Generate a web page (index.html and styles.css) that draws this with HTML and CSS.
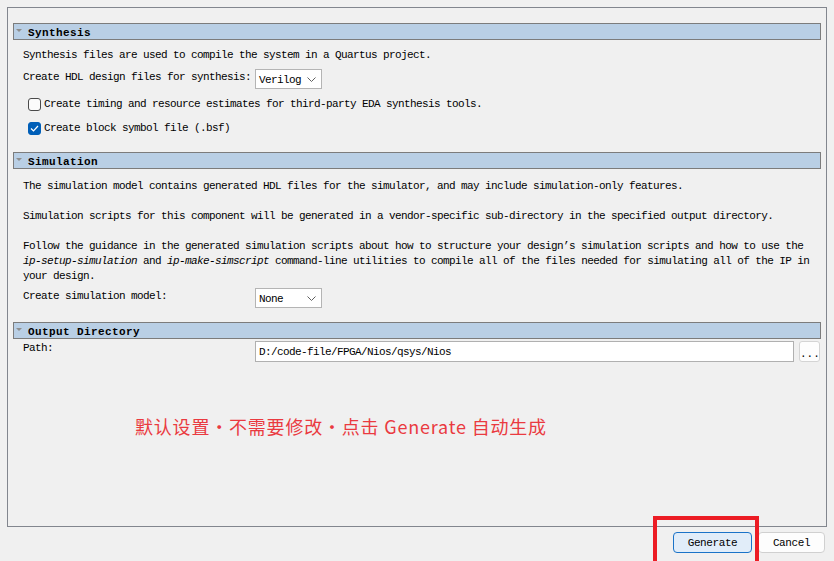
FILE: index.html
```html
<!DOCTYPE html>
<html lang="en">
<head>
  <meta charset="UTF-8">
  <title>Generation</title>
  <link rel="stylesheet" href="styles.css">
</head>
<body>
  <div class="panel">
    <!-- Synthesis -->
    <div class="section-head"><span class="arrow"></span>Synthesis</div>
    <div class="line first">Synthesis files are used to compile the system in a Quartus project.</div>
    <div class="field-row">
      <span class="label">Create HDL design files for synthesis:</span>
      <div class="select"><span>Verilog</span>
        <svg width="9" height="6" viewBox="0 0 9 6"><polyline points="0.5,0.5 4.5,4.5 8.5,0.5" fill="none" stroke="#606060" stroke-width="1"/></svg>
      </div>
    </div>
    <div class="check-row">
      <span class="check"></span>Create timing and resource estimates for third-party EDA synthesis tools.
    </div>
    <div class="check-row second">
      <span class="check on">
        <svg width="9" height="7" viewBox="0 0 9 7"><polyline points="1,3.5 3.5,6 8,1" fill="none" stroke="#fff" stroke-width="1.2"/></svg>
      </span>Create block symbol file (.bsf)
    </div>

    <!-- Simulation -->
    <div class="section-head gap"><span class="arrow"></span>Simulation</div>
    <p class="para first">The simulation model contains generated HDL files for the simulator, and may include simulation-only features.</p>
    <p class="para">Simulation scripts for this component will be generated in a vendor-specific sub-directory in the specified output directory.</p>
    <p class="para">Follow the guidance in the generated simulation scripts about how to structure your design’s simulation scripts and how to use the<br><em>ip-setup-simulation</em> and <em>ip-make-simscript</em> command-line utilities to compile all of the files needed for simulating all of the IP in<br>your design.</p>
    <div class="field-row sim">
      <span class="label">Create simulation model:</span>
      <div class="select"><span>None</span>
        <svg width="9" height="6" viewBox="0 0 9 6"><polyline points="0.5,0.5 4.5,4.5 8.5,0.5" fill="none" stroke="#606060" stroke-width="1"/></svg>
      </div>
    </div>

    <!-- Output Directory -->
    <div class="section-head gap"><span class="arrow"></span>Output Directory</div>
    <div class="path-row">
      <span class="label">Path:</span>
      <div class="path-input">D:/code-file/FPGA/Nios/qsys/Nios</div>
      <div class="browse">...</div>
    </div>

    <div class="note">默认设置・不需要修改・点击 Generate 自动生成</div>
  </div>

  <div class="actions">
    <button class="btn primary">Generate</button>
    <button class="btn">Cancel</button>
  </div>

  <div class="highlight"></div>
</body>
</html>
```

FILE: styles.css
```css
body {
  margin: 0;
  width: 834px;
  height: 561px;
  overflow: hidden;
  position: relative;
  background-color: #f0f0f0;
  color: #000;
  font-family: "Liberation Mono", "Noto Sans CJK SC", monospace;
  font-size: 11px;
  letter-spacing: -0.6px;
}

.panel {
  margin: 7px 0 0 7px;
  width: 820px;
  height: 520px;
  box-sizing: border-box;
  border: 1px solid #82868e;
  padding: 15px 5px 0 5px;
}

.section-head {
  display: flex;
  height: 17px;
  box-sizing: border-box;
  padding-top: 2px;
  line-height: 15px;
  border: 1px solid #7c7c7c;
  background-color: #b9cfe5;
  font-weight: bold;
  letter-spacing: 0.4px;
}

.section-head.gap {
  margin-top: 14px;
}

.arrow {
  width: 0;
  height: 0;
  margin: 3px 6px 0 2px;
  border-left: 3px solid transparent;
  border-right: 3px solid transparent;
  border-top: 3px solid #8e8e8e;
}

.line {
  height: 20px;
  line-height: 20px;
  padding-left: 10px;
}

.line.first {
  margin-top: 5px;
}

.field-row {
  display: flex;
  height: 20px;
  margin-top: 4px;
  padding-left: 10px;
}

.field-row .label {
  width: 232px;
  line-height: 17px;
}

.field-row.sim .label {
  line-height: 16px;
}

.select {
  width: 67px;
  height: 20px;
  box-sizing: border-box;
  border: 1px solid #b4b4b4;
  background-color: #fff;
  display: flex;
  align-items: center;
  justify-content: space-between;
  padding: 2px 5px 0 3px;
}

.select svg {
  margin-top: -1px;
}

.check-row {
  display: flex;
  align-items: center;
  height: 20px;
  margin-top: 5px;
  padding-left: 15px;
}

.check-row.second {
  margin-top: 4px;
}

.check {
  width: 13px;
  height: 13px;
  box-sizing: border-box;
  border: 1px solid #4a4a4a;
  border-radius: 3px;
  margin-right: 3px;
  background-color: #fbfbfb;
  display: flex;
  align-items: center;
  justify-content: center;
}

.check.on {
  border-color: #005fb8;
  background-color: #005fb8;
}

.para {
  margin: 15px 0 0 0;
  padding-left: 10px;
  line-height: 15px;
}

.para.first {
  margin-top: 10px;
}

.para em {
  font-style: italic;
}

.path-row {
  display: flex;
  margin-top: 2px;
  padding-left: 10px;
}

.path-row .label {
  width: 232px;
  line-height: 14px;
}

.path-input {
  width: 539px;
  height: 21px;
  box-sizing: border-box;
  border: 1px solid #b0b0b0;
  background-color: #fff;
  padding: 3px 0 0 3px;
  line-height: 15px;
}

.browse {
  width: 21px;
  height: 21px;
  box-sizing: border-box;
  margin-left: 5px;
  border: 1px solid #d4d4d4;
  border-radius: 3px;
  background-color: #fdfdfd;
  text-align: center;
  line-height: 24px;
  letter-spacing: 0;
}

.note {
  margin: 52px 0 0 122px;
  line-height: 24px;
  font-family: "Noto Sans CJK SC", "Noto Sans", sans-serif;
  font-size: 18px;
  letter-spacing: 0.8px;
  color: #ea3a40;
}

.actions {
  display: flex;
  justify-content: flex-end;
  gap: 6px;
  margin-top: 5px;
  padding-right: 9px;
}

.btn {
  height: 21px;
  box-sizing: border-box;
  padding: 0;
  border: 1px solid #d0d0d0;
  border-radius: 4px;
  background-color: #fdfdfd;
  font-family: "Liberation Mono", monospace;
  font-size: 11px;
  letter-spacing: -0.4px;
  color: #000;
  width: 67px;
}

.btn.primary {
  width: 79px;
  border-color: #1a73c8;
  background-color: #e1edf9;
}

.highlight {
  position: absolute;
  left: 653px;
  top: 516px;
  width: 106px;
  height: 60px;
  box-sizing: border-box;
  border: 4px solid #ec1c24;
}
```
